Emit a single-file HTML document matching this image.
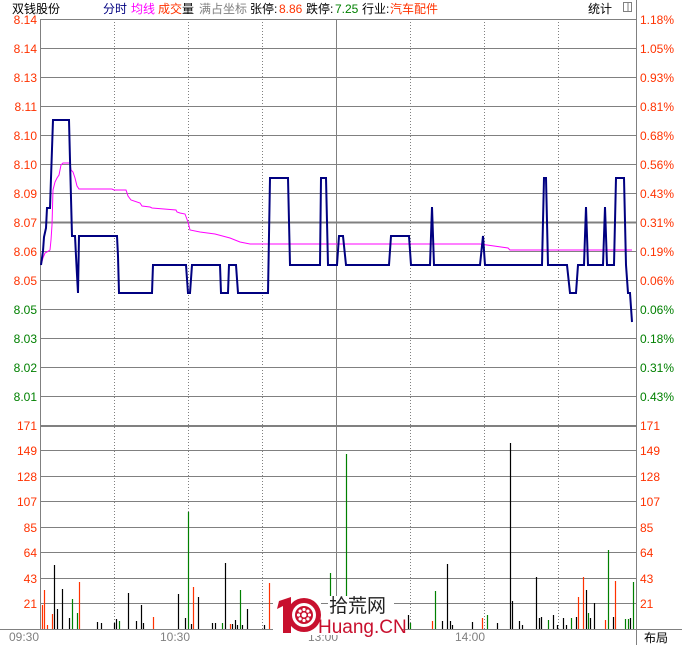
<!DOCTYPE html>
<html><head><meta charset="utf-8"><style>
html,body{margin:0;padding:0;background:#fff;}
body{width:682px;height:645px;overflow:hidden;position:relative;font-family:"Liberation Sans","Noto Sans CJK SC",sans-serif;}
svg text{font-family:"Liberation Sans","Noto Sans CJK SC",sans-serif;}
</style></head><body>
<svg width="682" height="645" viewBox="0 0 682 645" xmlns="http://www.w3.org/2000/svg">
<g font-size="12">
<text x="12" y="13" fill="#000">双钱股份</text>
<text x="103" y="13" fill="#000080">分时</text>
<text x="131" y="13" fill="#ff00ff">均线</text>
<text x="158" y="13" fill="#ff3200">成交</text><text x="182" y="13" fill="#000">量</text>
<text x="199" y="13" fill="#808080">满占坐标</text>
<text x="250" y="13" fill="#000">张停:</text><text x="279" y="13" fill="#ff3200">8.86</text>
<text x="306" y="13" fill="#000">跌停:</text><text x="335" y="13" fill="#008000">7.25</text>
<text x="362" y="13" fill="#000">行业:</text><text x="390" y="13" fill="#ff3200">汽车配件</text>
<text x="588" y="13" fill="#000">统计</text>
</g>
<rect x="623.5" y="2.5" width="8" height="9" fill="none" stroke="#808080"/>
<line x1="628" y1="3" x2="628" y2="11" stroke="#808080"/>
<g stroke="#808080" stroke-width="1">
<line x1="40.5" y1="19" x2="40.5" y2="629"/>
<line x1="636.5" y1="0" x2="636.5" y2="645"/>
<line x1="336.5" y1="19" x2="336.5" y2="629"/>
<line x1="40" y1="19.5" x2="636" y2="19.5"/>
<line x1="40" y1="48.5" x2="636" y2="48.5"/>
<line x1="40" y1="77.5" x2="636" y2="77.5"/>
<line x1="40" y1="106.5" x2="636" y2="106.5"/>
<line x1="40" y1="135.5" x2="636" y2="135.5"/>
<line x1="40" y1="164.5" x2="636" y2="164.5"/>
<line x1="40" y1="193.5" x2="636" y2="193.5"/>
<line x1="40" y1="222.5" x2="636" y2="222.5" stroke-width="2"/>
<line x1="40" y1="251.5" x2="636" y2="251.5"/>
<line x1="40" y1="280.5" x2="636" y2="280.5"/>
<line x1="40" y1="309.5" x2="636" y2="309.5"/>
<line x1="40" y1="338.5" x2="636" y2="338.5"/>
<line x1="40" y1="367.5" x2="636" y2="367.5"/>
<line x1="40" y1="396.5" x2="636" y2="396.5"/>
<line x1="40" y1="426" x2="636" y2="426" stroke-width="2"/>
<line x1="40" y1="450.5" x2="636" y2="450.5"/>
<line x1="40" y1="476.5" x2="636" y2="476.5"/>
<line x1="40" y1="501.5" x2="636" y2="501.5"/>
<line x1="40" y1="527.5" x2="636" y2="527.5"/>
<line x1="40" y1="552.5" x2="636" y2="552.5"/>
<line x1="40" y1="578.5" x2="636" y2="578.5"/>
<line x1="40" y1="603.5" x2="636" y2="603.5"/>
<line x1="0" y1="629.5" x2="682" y2="629.5"/>
</g>
<g stroke="#808080" stroke-dasharray="1,2">
<line x1="114.5" y1="19" x2="114.5" y2="629"/>
<line x1="188.5" y1="19" x2="188.5" y2="629"/>
<line x1="262.5" y1="19" x2="262.5" y2="629"/>
<line x1="410.5" y1="19" x2="410.5" y2="629"/>
<line x1="484.5" y1="19" x2="484.5" y2="629"/>
<line x1="558.5" y1="19" x2="558.5" y2="629"/>
</g>
<g font-size="12" text-anchor="end" fill="#ff3200">
<text x="37" y="24">8.14</text><text x="37" y="53">8.14</text><text x="37" y="82">8.13</text>
<text x="37" y="111">8.11</text><text x="37" y="140">8.10</text><text x="37" y="169">8.10</text>
<text x="37" y="198">8.09</text><text x="37" y="227">8.07</text><text x="37" y="256">8.06</text>
<text x="37" y="285">8.05</text>
<text x="37" y="314" fill="#008000">8.05</text><text x="37" y="343" fill="#008000">8.03</text>
<text x="37" y="372" fill="#008000">8.02</text><text x="37" y="401" fill="#008000">8.01</text>
<text x="37" y="430">171</text><text x="37" y="455">149</text><text x="37" y="481">128</text>
<text x="37" y="506">107</text><text x="37" y="532">85</text><text x="37" y="557">64</text>
<text x="37" y="583">43</text><text x="37" y="608">21</text>
</g>
<g font-size="12" fill="#ff3200">
<text x="640" y="24">1.18%</text><text x="640" y="53">1.05%</text><text x="640" y="82">0.93%</text>
<text x="640" y="111">0.81%</text><text x="640" y="140">0.68%</text><text x="640" y="169">0.56%</text>
<text x="640" y="198">0.43%</text><text x="640" y="227">0.31%</text><text x="640" y="256">0.19%</text>
<text x="640" y="285">0.06%</text>
<text x="640" y="314" fill="#008000">0.06%</text><text x="640" y="343" fill="#008000">0.18%</text>
<text x="640" y="372" fill="#008000">0.31%</text><text x="640" y="401" fill="#008000">0.43%</text>
<text x="640" y="430">171</text><text x="640" y="455">149</text><text x="640" y="481">128</text>
<text x="640" y="506">107</text><text x="640" y="532">85</text><text x="640" y="557">64</text>
<text x="640" y="583">43</text><text x="640" y="608">21</text>
</g>
<g font-size="12" fill="#808080">
<text x="9" y="641">09:30</text><text x="160" y="641">10:30</text><text x="308" y="641">13:00</text><text x="455" y="641">14:00</text>
</g>
<text x="644" y="642" font-size="12" fill="#000">布局</text>
<g stroke-width="1.2">
<path stroke="#ff3200" d="M42.5 629V605M44.5 629V590M47.5 629V625M52.5 629V614M79.5 629V582M153.5 629V617M193.5 629V587M230.5 629V624M269.5 629V583M432.5 629V621M482.5 629V618M578.5 629V597M583.5 629V577M605.5 629V620M615.5 629V581"/>
<path stroke="#000" d="M54.5 629V565M57.5 629V609M62.5 629V589M69.5 629V618M97.5 629V622M101.5 629V623M114.5 629V623M116.5 629V619M128.5 629V593M136.5 629V621M141.5 629V605M143.5 629V623M178.5 629V594M185.5 629V618M191.5 629V624M198.5 629V597M212.5 629V623M215.5 629V623M225.5 629V563M232.5 629V624M235.5 629V620M237.5 629V625M242.5 629V625M247.5 629V609M264.5 629V625M408.5 629V615M442.5 629V621M447.5 629V564M450.5 629V621M452.5 629V625M472.5 629V622M497.5 629V623M510.5 629V443M512.5 629V601M519.5 629V621M522.5 629V625M536.5 629V577M539.5 629V618M541.5 629V617M553.5 629V615M557.5 629V625M563.5 629V618M566.5 629V625M576.5 629V617M586.5 629V590M590.5 629V618M594.5 629V603M613.5 629V617M630.5 629V618"/>
<path stroke="#008000" d="M72.5 629V599M77.5 629V613M119.5 629V621M188.5 629V512M222.5 629V623M240.5 629V590M330.5 629V573M346.5 629V454M410.5 629V623M435.5 629V591M487.5 629V615M548.5 629V620M571.5 629V618M588.5 629V613M608.5 629V550M625.5 629V619M628.5 629V619M633.5 629V582"/>
</g>
<polyline fill="none" stroke="#ff00ff" stroke-width="1" points="41,265 43,258 45,253 47,252 50,250 51,240 52,225 53,190 55,182 57,178 59,175 61,165 63,163 70,163 71,170 73,172 75,178 77,186 79,189 112,189 114,190 126,190 128,196 131,200 140,203 142,206 150,207 152,208 176,210 177,212 180,213 185,214 188,222 190,230 200,232 215,234 230,238 240,242 250,244 300,244 380,244 480,244 508,248 510,250 632,250"/>
<polyline fill="none" stroke="#000080" stroke-width="2" points="41,265 43,251 44,237 46,228 47,208 50,208 51,178 52,149 53,120 69,120 70,160 71,198 72,236 75,236 76,256 77,275 78,293 79,236 117,236 118,256 119,293 152,293 153,265 186,265 188,293 190,293 192,265 220,265 221,293 228,293 229,265 236,265 238,293 268,293 270,178 288,178 290,265 320,265 321,178 326,178 328,265 337,265 339,236 343,236 346,265 389,265 391,236 409,236 411,265 430,265 432,207 434,265 480,265 483,236 485,265 542,265 544,178 546,178 548,265 567,265 570,293 576,293 578,265 584,265 586,207 588,265 603,265 605,207 607,265 614,265 616,178 624,178 626,265 628,293 630,293 632,322"/>
<!-- watermark -->
<rect x="273" y="595" width="48" height="40" fill="#fff"/>
<rect x="328" y="596" width="66" height="18" fill="#fff"/>
<rect x="318" y="614" width="84" height="21" fill="#fff"/>
<path d="M279 601 L291 597 L291 633 L283 633 L283 606 L277 609 Z" fill="#c8102e"/>
<g transform="translate(304,615)">
<circle r="17" fill="#c8102e"/>
<circle r="12" fill="#fff"/>
<circle r="9" fill="#c8102e"/>
<circle r="2.5" fill="#fff"/>
<g fill="#fff">
<circle cx="0" cy="-5.5" r="1.6"/><circle cx="0" cy="5.5" r="1.6"/><circle cx="-5.5" cy="0" r="1.6"/><circle cx="5.5" cy="0" r="1.6"/>
<circle cx="3.9" cy="3.9" r="1.6"/><circle cx="-3.9" cy="3.9" r="1.6"/><circle cx="3.9" cy="-3.9" r="1.6"/><circle cx="-3.9" cy="-3.9" r="1.6"/>
</g>
</g>
<text x="329" y="612" font-size="19" fill="#222">拾荒网</text>
<text x="318" y="633" font-size="19" fill="#c8102e">Huang.CN</text>
</svg>
</body></html>
